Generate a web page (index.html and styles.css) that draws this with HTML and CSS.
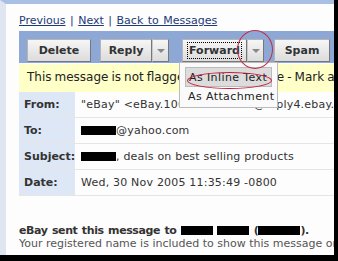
FILE: index.html
```html
<!DOCTYPE html>
<html lang="en">
<head>
    <meta charset="UTF-8">
    <title>Message</title>
    <link rel="stylesheet" href="styles.css">
</head>
<body>

<div class="screen">
    <div class="main">
        <div class="nav-links">
            <a href="#">Previous</a> | <a href="#">Next</a> | <a href="#">Back to Messages</a>
        </div>

        <!-- Toolbar -->
        <div class="toolbar">
            <button class="btn btn-delete">Delete</button>
            <div class="split">
                <button class="btn btn-reply">Reply</button>
                <button class="btn btn-drop"><span class="caret"></span></button>
            </div>
            <div class="split">
                <button class="btn btn-forward"><span class="focus">Forward</span></button>
                <button class="btn btn-drop"><span class="caret"></span></button>
            </div>
            <button class="btn btn-spam">Spam</button>
        </div>

        <div class="flag-bar">This message is not flagged. [Flag Message - Mark as Unread]</div>

        <table class="headers">
            <tr><th>From:</th><td>"eBay" &lt;eBay.10650948.1134@reply4.ebay.com&gt;</td></tr>
            <tr><th>To:</th><td><span class="redact r-to"></span>@yahoo.com</td></tr>
            <tr><th>Subject:</th><td><span class="redact r-subj"></span>, deals on best selling products</td></tr>
            <tr><th>Date:</th><td>Wed, 30 Nov 2005 11:35:49 -0800</td></tr>
        </table>

        <div class="sent-note">
            <p class="sent-to">eBay sent this message to <span class="redact r-a"></span> <span class="redact r-a"></span> (<span class="redact r-b"></span>).</p>
            <p class="sent-info">Your registered name is included to show this message originated from eBay.</p>
        </div>
    </div>

    <!-- Forward dropdown menu -->
    <div class="fwd-menu">
        <div class="menu-item active">As Inline Text</div>
        <div class="menu-item">As Attachment</div>
    </div>

    <!-- red markings -->
    <div class="circle"></div>
    <div class="ellipse"></div>
</div>

</body>
</html>
```

FILE: styles.css
```css
body {
    margin: 0;
    background-color: #000;
    font-family: "DejaVu Sans", Verdana, sans-serif;
}

.screen {
    position: relative;
    width: 328px;
    height: 251px;
    border-top: 4px solid #a9bfe3;
    border-left: 6px solid #dfe6f2;
    background-color: #fdfdfd;
    overflow: hidden;
}

.main {
    padding: 10px 0 0 13px;
    width: 360px;
}

/* Links */
.nav-links {
    font-size: 11px;
    color: #1e3a78;
    height: 17px;
    word-spacing: 1px;
}

.nav-links a {
    color: #1e3a78;
}

/* Toolbar */
.toolbar {
    display: flex;
    align-items: center;
    gap: 9px;
    background-color: #8ea8d6;
    padding: 8px 8px 1px 8px;
    height: 23px;
}

.btn {
    font-family: "DejaVu Sans", Verdana, sans-serif;
    font-size: 11px;
    font-weight: bold;
    color: #333;
    height: 23px;
    padding: 0;
    background: linear-gradient(#f6f6f6, #dcdcdc);
    border: 1px solid #b5b5b5;
    border-right-color: #777;
    border-bottom-color: #777;
}

.btn-delete {
    width: 64px;
}

.split {
    display: flex;
}

.btn-reply {
    width: 52px;
}

.btn-forward {
    width: 65px;
}

.btn-spam {
    width: 56px;
    margin-left: 1px;
}

.btn-drop {
    width: 17px;
    border-left: 1px solid #c8c8c8;
}

.split + .split {
    margin-left: 4px;
}

.focus {
    border: 1px dotted #000;
    padding: 1px 1px;
}

.caret {
    display: inline-block;
    width: 0;
    height: 0;
    border-left: 4px solid transparent;
    border-right: 4px solid transparent;
    border-top: 4px solid #888;
    vertical-align: middle;
}

/* Flag bar */
.flag-bar {
    margin-top: 1px;
    background-color: #ffffc8;
    font-size: 12px;
    color: #222;
    padding: 0 0 0 8px;
    height: 28px;
    line-height: 26px;
    white-space: nowrap;
    word-spacing: -0.8px;
}

/* Header table */
.headers {
    border-collapse: collapse;
    font-size: 11px;
    width: 100%;
}

.headers th {
    width: 50px;
    text-align: left;
    background-color: #dde7f5;
    color: #333;
    padding: 0 0 0 5px;
    height: 25px;
    border-bottom: 1px solid #e6e6e6;
}

.headers td {
    padding: 0 0 0 6px;
    color: #333;
    white-space: nowrap;
    border-bottom: 1px solid #e6e6e6;
    letter-spacing: 0.2px;
}

.redact {
    display: inline-block;
    background-color: #000;
    height: 9px;
    vertical-align: -1px;
}

.r-to {
    width: 35px;
}

.r-subj {
    width: 35px;
}

.r-a {
    width: 32px;
}

.r-b {
    width: 42px;
}

/* Bottom note */
.sent-note {
    margin-top: 28px;
    font-size: 11px;
}

.sent-note p {
    margin: 0;
    white-space: nowrap;
}

.sent-to {
    font-weight: bold;
    color: #333;
    letter-spacing: -0.4px;
    word-spacing: 1px;
}

.sent-info {
    color: #555;
}

/* Forward menu (overlay) */
.fwd-menu {
    position: absolute;
    left: 173px;
    top: 58px;
    width: 99px;
    height: 46px;
    background-color: #fafafa;
    border: 1px solid #bbb;
    font-size: 11px;
    color: #222;
    padding-top: 4px;
    box-sizing: border-box;
}

.menu-item {
    margin: 0 5px;
    padding-left: 3px;
    height: 20px;
    line-height: 19px;
    letter-spacing: 0.4px;
    white-space: nowrap;
}

.menu-item.active {
    background-color: #dcdcdc;
    border: 1px solid #bbb;
    box-sizing: border-box;
}

.circle {
    position: absolute;
    left: 231px;
    top: 26px;
    width: 34px;
    height: 37px;
    border: 1px solid #c0304a;
    border-radius: 50%;
}

.ellipse {
    position: absolute;
    left: 181px;
    top: 68px;
    width: 83px;
    height: 15px;
    border: 1.5px solid #c81e3c;
    border-radius: 50%;
}
```
